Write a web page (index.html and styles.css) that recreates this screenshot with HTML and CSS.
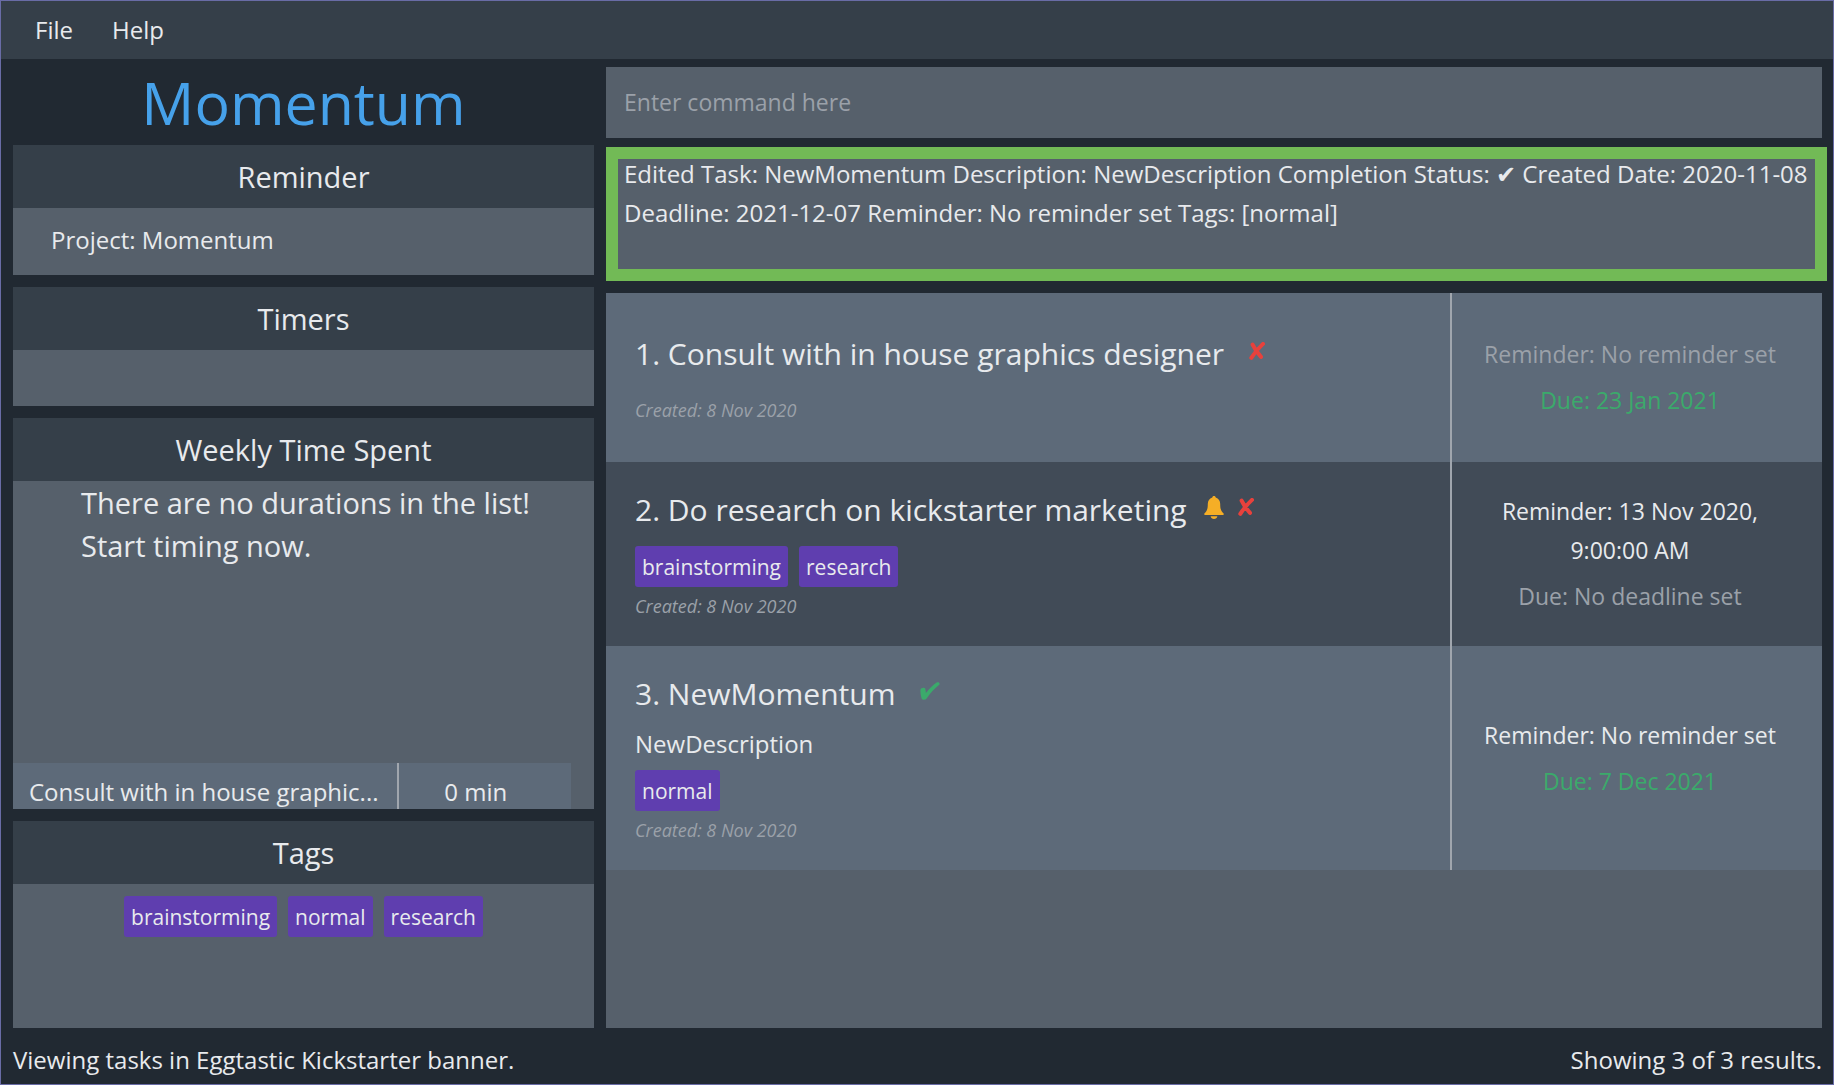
FILE: index.html
```html
<!DOCTYPE html>
<html lang="en">
<head>
<meta charset="utf-8">
<title>Momentum</title>
<link rel="stylesheet" href="styles.css">
</head>
<body>
<svg class="sprite" aria-hidden="true">
  <symbol id="cross" viewBox="0 0 16 18">
    <path d="M3.6 2.6 Q6.4 8.4 12 14.9 M14 1.9 Q7.2 8.2 2.3 15.8" fill="none" stroke="currentColor" stroke-width="4" stroke-linecap="round"/>
  </symbol>
  <symbol id="check" viewBox="0 0 20 18">
    <path d="M0.5 7.6 C1 5.6 4.6 5 5.3 6.8 C5.7 8 5.7 9.6 5.9 11 C9.5 6.6 13 3.2 16.6 0.6 C18 -0.1 20 0.2 19.5 2.6 C14.5 6.6 10 11.4 6.6 16.6 C5.6 18.2 2.2 18.2 1.6 16.4 C0.7 13.6 0.2 10.4 0.5 7.6 Z" fill="currentColor"/>
  </symbol>
  <symbol id="bell" viewBox="0 0 20 23">
    <path d="M10 0 C11 0 11.7 0.7 11.7 1.4 C14.6 2.2 16.2 4.8 16.2 8 C16.2 13 17 15 19.6 17.6 C20 18.4 19.7 19 19 19 H1 C0.3 19 0 18.4 0.4 17.6 C3 15 3.8 13 3.8 8 C3.8 4.8 5.4 2.2 8.3 1.4 C8.3 0.7 9 0 10 0 Z M6.6 20.2 H13.4 C13 22 11.8 23 10 23 C8.2 23 7 22 6.6 20.2 Z" fill="currentColor"/>
  </symbol>
</svg>
<div class="window">
  <nav class="menu-bar">
    <button type="button">File</button>
    <button type="button">Help</button>
  </nav>
  <main class="content">
    <aside class="sidebar">
      <h1 class="brand">Momentum</h1>
      <section class="panel panel-reminder">
        <h2>Reminder</h2>
        <p class="reminder-text">Project: Momentum</p>
      </section>
      <section class="panel panel-timers">
        <h2>Timers</h2>
      </section>
      <section class="panel panel-weekly">
        <h2>Weekly Time Spent</h2>
        <p class="weekly-text">There are no durations in the list!<br>Start timing now.</p>
        <table class="durations">
          <tbody><tr><td>Consult with in house graphic...</td><td>0 min</td></tr></tbody>
        </table>
      </section>
      <section class="panel panel-tags">
        <h2>Tags</h2>
        <ul class="tags">
          <li>brainstorming</li>
          <li>normal</li>
          <li>research</li>
        </ul>
      </section>
    </aside>
    <div class="workspace">
      <input class="command" type="text" aria-label="Command" placeholder="Enter command here">
      <p class="result">Edited Task: NewMomentum Description: NewDescription Completion Status: ✔ Created Date: 2020-11-08 Deadline: 2021-12-07 Reminder: No reminder set Tags: [normal]</p>
      <ol class="tasks">
        <li class="task">
          <div class="task-main">
            <div class="task-title">
              <h3>1. Consult with in house graphics designer</h3>
              <span class="icons"><svg class="cross"><use href="#cross"/></svg></span>
            </div>
            <p class="created">Created: 8 Nov 2020</p>
          </div>
          <div class="task-dates">
            <p class="muted">Reminder: No reminder set</p>
            <p class="due">Due: 23 Jan 2021</p>
          </div>
        </li>
        <li class="task">
          <div class="task-main">
            <div class="task-title">
              <h3>2. Do research on kickstarter marketing</h3>
              <span class="icons"><svg class="bell"><use href="#bell"/></svg><svg class="cross"><use href="#cross"/></svg></span>
            </div>
            <ul class="tags">
              <li>brainstorming</li>
              <li>research</li>
            </ul>
            <p class="created">Created: 8 Nov 2020</p>
          </div>
          <div class="task-dates">
            <p>Reminder: 13 Nov 2020, 9:00:00 AM</p>
            <p class="muted">Due: No deadline set</p>
          </div>
        </li>
        <li class="task">
          <div class="task-main">
            <div class="task-title">
              <h3>3. NewMomentum</h3>
              <span class="icons"><svg class="check"><use href="#check"/></svg></span>
            </div>
            <p class="description">NewDescription</p>
            <ul class="tags">
              <li>normal</li>
            </ul>
            <p class="created">Created: 8 Nov 2020</p>
          </div>
          <div class="task-dates">
            <p>Reminder: No reminder set</p>
            <p class="due">Due: 7 Dec 2021</p>
          </div>
        </li>
      </ol>
    </div>
  </main>
  <footer class="status-bar">
    <span>Viewing tasks in Eggtastic Kickstarter banner.</span>
    <span>Showing 3 of 3 results.</span>
  </footer>
</div>
</body>
</html>
```
FILE: styles.css
```css
* {
  box-sizing: border-box;
  margin: 0;
  padding: 0;
}

body {
  background: #212932;
  color: #e8eaed;
  font: 24px/39px "Segoe UI", "Open Sans", "Noto Sans", "DejaVu Sans", sans-serif;
}

ul, ol {
  list-style: none;
}

h1, h2, h3 {
  font-weight: 400;
}

.sprite {
  position: absolute;
  width: 0;
  height: 0;
}

.window {
  display: flex;
  flex-direction: column;
  min-height: 100vh;
  border: 1px solid #696ca6;
}

/* Menu */
.menu-bar {
  display: flex;
  gap: 39px;
  padding: 9px 34px 10px;
  background: #353f49;
}

.menu-bar button {
  border: 0;
  background: none;
  color: inherit;
  font: inherit;
}

/* Columns */
.content {
  flex: 1;
  display: grid;
  grid-template-columns: 581fr 1216fr;
  gap: 12px;
  padding: 0 11px 0 12px;
}

.sidebar {
  display: flex;
  flex-direction: column;
  gap: 12px;
}

.brand {
  margin-bottom: -12px;
  color: #46a1ea;
  font-size: 59px;
  line-height: 86px;
  text-align: center;
}

/* Sidebar panels */
.panel {
  background: #56606b;
}

.panel h2 {
  padding: 10px 0;
  background: #353f49;
  font-size: 29px;
  line-height: 43px;
  text-align: center;
}

.reminder-text {
  padding: 12px 38px 16px;
}

.panel-timers {
  min-height: 119px;
}

.panel-weekly {
  flex: 1;
  display: flex;
  flex-direction: column;
}

.weekly-text {
  flex: 1;
  padding: 0 48px 0 68px;
  font-size: 29px;
  line-height: 43px;
}

.durations {
  width: 96%;
  border-collapse: collapse;
  table-layout: fixed;
  background: #5d6a79;
}

.durations td {
  padding: 12px 16px 0;
  line-height: 34px;
  white-space: nowrap;
}

.durations td:first-child {
  width: 69%;
  border-right: 2px solid #a0a6ae;
}

.durations td:last-child {
  padding-right: 34px;
  text-align: center;
}

.panel-tags {
  min-height: 207px;
}

.panel-tags .tags {
  justify-content: center;
  padding: 12px;
}

.tags {
  display: flex;
  flex-wrap: wrap;
  gap: 11px;
}

.tags li {
  padding: 4px 7px 2px;
  border-radius: 3px;
  background: #5f3eaf;
  font-size: 21px;
  line-height: 35px;
}

/* Workspace */
.workspace {
  display: flex;
  flex-direction: column;
  padding-top: 8px;
}

.command {
  width: 100%;
  padding: 16px 18px;
  border: 0;
  outline: 0;
  background: #56606b;
  color: inherit;
  font: inherit;
  font-size: 23px;
  line-height: 39px;
}

.command::placeholder {
  color: #9ba1a9;
  opacity: 1;
}

.result {
  position: relative;
  min-height: 134px;
  margin: 9px 0 12px;
  padding: 7px 8px 7px 18px;
  background: #56606b;
}

/* Highlight frame drawn over the edges of the result box */
.result::after {
  content: "";
  position: absolute;
  inset: 0 -5px 0 0;
  border: 12px solid #72ba56;
}

/* Task list */
.tasks {
  flex: 1;
  background: #56606b;
}

.task {
  display: flex;
  min-height: 169px;
  background: #5d6a79;
}

.task:nth-child(even) {
  background: #414b57;
}

.task-main {
  flex: 1;
  display: flex;
  flex-direction: column;
  justify-content: center;
  padding: 26px 29px;
}

.task-title {
  display: flex;
}

.task-title h3 {
  font-size: 30px;
  line-height: 43px;
}

.icons {
  display: flex;
  align-items: flex-start;
  gap: 14px;
  padding: 8px 0 0 17px;
}

.icons svg:first-child:last-child {
  margin-left: 8px;
}

.cross {
  width: 16px;
  height: 18px;
  margin-top: 2px;
  color: #e8413c;
}

.check {
  width: 20px;
  height: 18px;
  margin-top: 2px;
  color: #3baa6b;
}

.bell {
  width: 20px;
  height: 23px;
  color: #f5ae26;
}

.description {
  margin-top: 9px;
}

.task .tags {
  margin-top: 15px;
}

.task .description + .tags {
  margin-top: 7px;
}

.created {
  margin-top: 21px;
  color: #9ba1a9;
  font-size: 18px;
  font-style: italic;
  line-height: 28px;
}

.tags + .created {
  margin-top: 5px;
}

.task-dates {
  flex: 0 0 372px;
  display: flex;
  flex-direction: column;
  justify-content: center;
  gap: 7px;
  padding: 0 28px 0 14px;
  border-left: 2px solid #a0a6ae;
  font-size: 23px;
  text-align: center;
}

.muted {
  color: #9ba1a9;
}

.due {
  color: #3baa6b;
}

/* Footer */
.status-bar {
  display: flex;
  justify-content: space-between;
  padding: 12px 11px 5px 12px;
}
```
